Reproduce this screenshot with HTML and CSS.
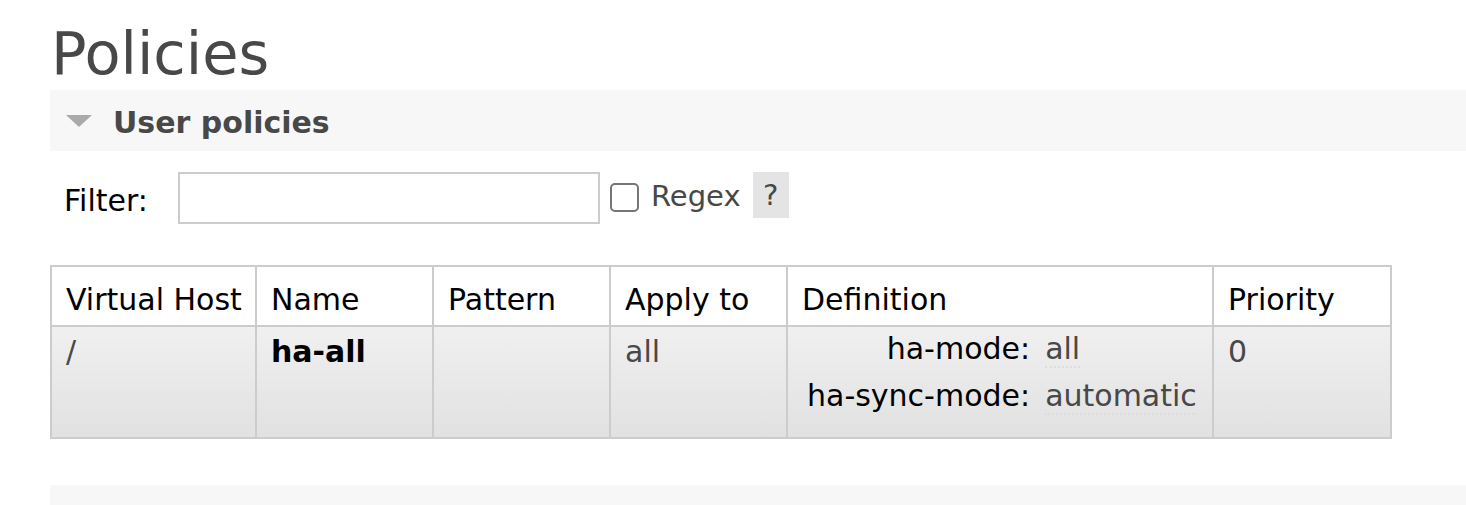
FILE: index.html
```html
<!DOCTYPE html>
<html>
<head>
<meta charset="utf-8">
<link rel="stylesheet" href="styles.css">
</head>
<body>
<div class="main">
  <h1 class="title">Policies</h1>
  <div class="section">
    <div class="section-head"><span class="tri"></span><span class="section-title">User policies</span></div>
    <div class="filter-row">
      <label class="filter-label">Filter:</label>
      <input class="filter-input" type="text">
      <span class="checkbox"></span>
      <span class="regex">Regex</span>
      <span class="help">?</span>
    </div>
    <table class="list">
      <colgroup>
        <col class="c1"><col class="c2"><col class="c3"><col class="c4"><col class="c5"><col class="c6">
      </colgroup>
      <thead>
        <tr><th>Virtual Host</th><th>Name</th><th>Pattern</th><th>Apply to</th><th>Definition</th><th>Priority</th></tr>
      </thead>
      <tbody>
        <tr>
          <td class="gray">/</td>
          <td class="name">ha-all</td>
          <td></td>
          <td class="gray">all</td>
          <td class="defcell">
            <table class="facts">
              <tr><th>ha-mode:</th><td><abbr>all</abbr></td></tr>
              <tr><th>ha-sync-mode:</th><td><abbr>automatic</abbr></td></tr>
            </table>
          </td>
          <td class="gray">0</td>
        </tr>
      </tbody>
    </table>
  </div>
  <div class="section next">
    <div class="section-head"><span class="tri"></span><span class="section-title">Operator policies</span></div>
  </div>
</div>
</body>
</html>
```
FILE: styles.css
```css
html, body {
  margin: 0;
  padding: 0;
  background: #fff;
  overflow: hidden;
}
body {
  font-family: "DejaVu Sans", Verdana, sans-serif;
  color: #484848;
  font-size: 30px;
}
.main {
  padding-left: 50px;
}
.title {
  margin: 0;
  padding: 18px 0 0 1px;
  font-size: 59px;
  font-weight: normal;
  line-height: 72px;
  color: #484848;
}
.section-head {
  background: #f7f7f7;
  height: 61px;
  box-sizing: border-box;
  padding-top: 3px;
  display: flex;
  align-items: center;
}
.tri {
  width: 0;
  height: 0;
  margin-left: 16px;
  margin-right: 21px;
  margin-top: -3px;
  border-left: 13.5px solid transparent;
  border-right: 13.5px solid transparent;
  border-top: 12px solid #aaa;
}
.section-title {
  font-weight: bold;
  font-size: 30px;
  color: #484848;
}
.filter-row {
  display: flex;
  align-items: flex-start;
  margin-top: 21px;
  height: 52px;
}
.filter-label {
  color: #000;
  margin-left: 14px;
  margin-top: 11px;
  width: 114px;
}
.filter-input {
  box-sizing: border-box;
  width: 422px;
  height: 52px;
  border: 2px solid #ccc;
  margin: 0;
  padding: 0;
  background: #fff;
}
.checkbox {
  box-sizing: border-box;
  width: 29px;
  height: 29px;
  margin-left: 10px;
  margin-top: 11px;
  border: 2px solid #767676;
  border-radius: 5px;
  background: #fff;
}
.regex {
  margin-left: 12px;
  margin-top: 7px;
  font-size: 29px;
  color: #484848;
}
.help {
  margin-left: 12px;
  width: 36px;
  height: 46px;
  background: #e4e4e4;
  text-align: center;
  line-height: 46px;
  font-size: 29px;
  color: #484848;
}
.list {
  margin-top: 41px;
  border-collapse: collapse;
  table-layout: fixed;
  width: 1340px;
  border: 2px solid #ccc;
}
.c1 { width: 205px; }
.c2 { width: 177px; }
.c3 { width: 177px; }
.c4 { width: 177px; }
.c5 { width: 426px; }
.c6 { width: 178px; }
.list > thead > tr > th {
  font-weight: normal;
  color: #000;
  text-align: left;
  border: 2px solid #ccc;
  padding: 6px 0 0 14px;
  height: 52px;
  background: #fff;
  white-space: nowrap;
}
.list > tbody > tr {
  background: linear-gradient(#f0f0f0, #e1e1e1);
}
.list > tbody > tr > td {
  border: 2px solid #ccc;
  vertical-align: top;
  padding: 7px 0 0 14px;
  height: 103px;
  line-height: 36px;
}
.gray { color: #484848; }
.name { color: #000; font-weight: bold; }
.list > tbody > tr > td.defcell { padding: 4px 0 0 19px; }
.facts {
  border-collapse: collapse;
}
.facts th {
  font-weight: normal;
  color: #000;
  text-align: right;
  padding: 0 15px 0 0;
  line-height: 36px;
  vertical-align: top;
}
.facts td {
  padding: 0;
  color: #484848;
  vertical-align: top;
  line-height: 36px;
}
.facts tr:first-child th, .facts tr:first-child td { height: 47px; }
abbr {
  text-decoration: none;
  border-bottom: 2px dotted #ddd;
}
.next {
  margin-top: 46px;
}
```
